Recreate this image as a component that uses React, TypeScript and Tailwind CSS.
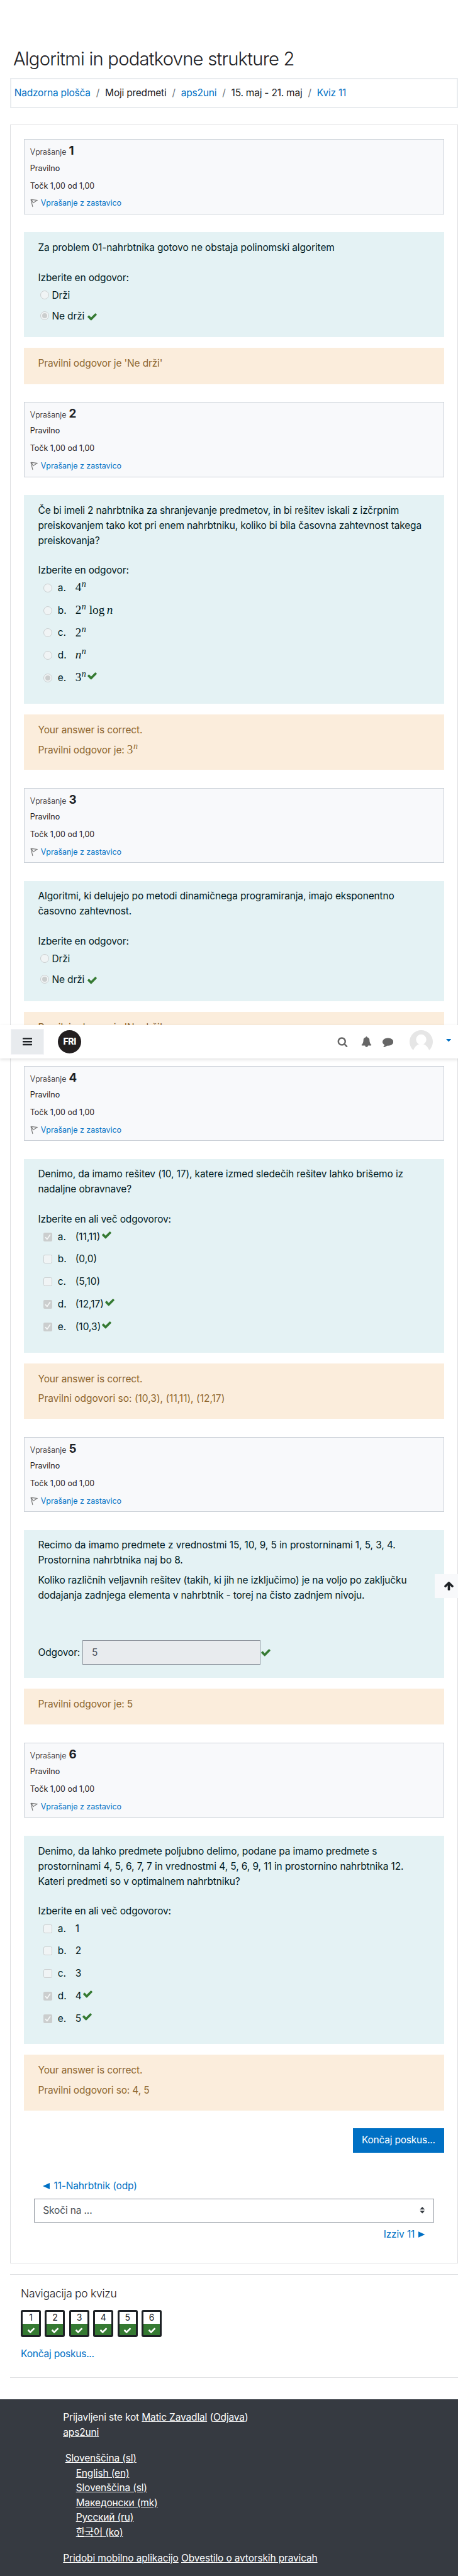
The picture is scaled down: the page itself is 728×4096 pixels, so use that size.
import React from "react";

function Svg({ d, className }: { d: string; className: string }) {
  return (
    <svg viewBox="0 0 1792 1792" fill="currentColor" className={className}>
      <path d={d} />
    </svg>
  );
}

const CHECK =
  "M1671 566q0 40-28 68l-724 724-136 136q-28 28-68 28t-68-28l-136-136-362-362q-28-28-28-68t28-68l136-136q28-28 68-28t68 28l294 295 656-657q28-28 68-28t68 28l136 136q28 28 28 68z";
const SEARCH =
  "M1216 832q0-185-131.5-316.5t-316.5-131.5-316.5 131.5-131.5 316.5 131.5 316.5 316.5 131.5 316.5-131.5 131.5-316.5zm512 832q0 52-38 90t-90 38q-54 0-90-38l-343-342q-179 124-399 124-143 0-273.5-55.5t-225-150-150-225-55.5-273.5 55.5-273.5 150-225 225-150 273.5-55.5 273.5 55.5 225 150 150 225 55.5 273.5q0 220-124 399l343 343q37 37 37 90z";
const BELL =
  "M912 1696q0-16-16-16-59 0-101.5-42.5t-42.5-101.5q0-16-16-16t-16 16q0 73 51.5 124.5t124.5 51.5q16 0 16-16zm816-288q0 52-38 90t-90 38h-448q0 106-75 181t-181 75-181-75-75-181h-448q-52 0-90-38t-38-90q50-42 91-88t85-119.5 74.5-158.5 50-206 19.5-260q0-152 117-282.5t307-158.5q-8-19-8-39 0-40 28-68t68-28 68 28 28 68q0 20-8 39 190 28 307 158.5t117 282.5q0 139 19.5 260t50 206 74.5 158.5 85 119.5 91 88z";
const COMMENT =
  "M1792 896q0 174-120 321.5t-326 233-450 85.5q-70 0-145-8-198 175-460 242-49 14-114 22-17 2-30.5-9t-17.5-29v-1q-3-4-.5-12t2-10 4.5-9.5l6-9 7-8.5 8-9q7-8 31-34.5t34.5-38 31-39.5 32.5-51 27-59 26-76q-157-89-247.5-220t-90.5-281q0-130 71-248.5t191-204.5 286-136.5 348-50.5q244 0 450 85.5t326 233 120 321.5z";
const ARROW_UP =
  "M1675 971q0 51-37 90l-75 75q-38 38-91 38-54 0-90-38l-294-293v704q0 52-37.5 84.5t-90.5 32.5h-128q-53 0-90.5-32.5t-37.5-84.5v-704l-294 293q-36 38-90 38t-90-38l-75-75q-38-38-38-90 0-53 38-91l651-651q35-37 90-37 54 0 91 37l651 651q37 39 37 91z";

function Tick({ className = "" }: { className?: string }) {
  return <Svg d={CHECK} className={"size-[17px] shrink-0 text-[#357a32] " + className} />;
}

function Radio({ on, className = "" }: { on?: boolean; className?: string }) {
  return (
    <span className={"flex size-[14px] shrink-0 items-center justify-center rounded-full border border-[#cbcfd0] bg-[#f0f4f5] " + className}>
      {on && <span className="size-[8px] rounded-full bg-[#cbcece]" />}
    </span>
  );
}

function Box({ on }: { on?: boolean }) {
  return on ? (
    <span className="flex size-[14px] shrink-0 items-center justify-center rounded-[2px] bg-[#cbcece]">
      <svg viewBox="0 0 14 14" className="size-[14px]">
        <path d="M3.4 7.6 5.8 10.4 10.6 3.6" fill="none" stroke="#f4f7f7" strokeWidth="1.7" strokeLinecap="round" strokeLinejoin="round" />
      </svg>
    </span>
  ) : (
    <span className="size-[14px] shrink-0 rounded-[2.5px] border border-[#cbcfd0] bg-[#f0f4f5]" />
  );
}

function Pow({ base, tail, className = "" }: { base: React.ReactNode; tail?: React.ReactNode; className?: string }) {
  return (
    <span className={"inline-flex h-6 items-baseline font-['Liberation_Serif',serif] text-[19.2px] leading-6 tracking-normal " + className}>
      {base}
      <i className="relative -top-[7px] ml-[0.5px] text-[14px]">n</i>
      {tail}
    </span>
  );
}

function Info({ n }: { n: number }) {
  return (
    <div className="mb-[28.4px] h-[119.7px] border border-[#cad0d7] bg-[#f8f9fb] px-[8.3px] text-[12.5px] tracking-[-0.01px]">
      <div className="mt-[6.1px] flex h-6 items-baseline leading-6">
        <span className="font-light tracking-[-0.06px]">Vprašanje</span>
        <b className="ml-[4px] text-[18.8px] leading-6">{n}</b>
      </div>
      <div className="mt-[5.4px] h-5 leading-5">Pravilno</div>
      <div className="mt-[7.8px] h-5 leading-5">Točk 1,00 od 1,00</div>
      <div className="mt-[7.8px] flex h-5 items-center leading-5 tracking-[-0.06px] text-[#0070c4]">
        <svg viewBox="0 0 12 14" className="mr-[5px] h-[14px] w-[12px] text-[#777]">
          <path d="M1 1 4 13M2 1.4 11 2.4 4.6 6.6z" fill="none" stroke="currentColor" strokeWidth="1.1" />
        </svg>
        Vprašanje z zastavico
      </div>
    </div>
  );
}

function Body({ className, children }: { className: string; children: React.ReactNode }) {
  return <div className={"bg-[#e4f2f4] px-[22px] pt-[12.7px] whitespace-nowrap text-[#001a1e] " + className}>{children}</div>;
}

function Feedback({ className, children }: { className: string; children: React.ReactNode }) {
  return <div className={"mt-[17.1px] mb-[28.3px] bg-[#fbeddc] px-[22px] pt-[12.8px] whitespace-nowrap text-[#8e662e] " + className}>{children}</div>;
}

function TrueFalse() {
  return (
    <div className="mt-[4.6px] flex flex-col gap-[9px] pl-[4px]">
      <div className="flex h-6 items-center">
        <Radio className="mr-[4px] mb-[3px]" />
        Drži
      </div>
      <div className="flex h-6 items-center">
        <Radio on className="mr-[4px] mb-[3px]" />
        Ne drži
        <Tick className="ml-[4.3px]" />
      </div>
    </div>
  );
}

type Option = { label: React.ReactNode; on?: boolean; right?: boolean };

function Choices({ options, multi }: { options: Option[]; multi?: boolean }) {
  return (
    <div className="mt-[4.1px] flex flex-col gap-[11.8px] pl-[8.2px] tracking-normal">
      {options.map((o, i) => (
        <div key={i} className="flex h-6 items-center">
          {multi ? <Box on={o.on} /> : <Radio on={o.on} />}
          <span className="ml-[9px] w-[28px]">{"abcde"[i]}.</span>
          {o.label}
          {o.right && <Tick className="mb-[6.5px] ml-[1.2px]" />}
        </div>
      ))}
    </div>
  );
}

function Correct({ children }: { children: React.ReactNode }) {
  return (
    <Feedback className="h-[88.5px]">
      <p>Your answer is correct.</p>
      <p className="mt-[7.8px] h-6">{children}</p>
    </Feedback>
  );
}

function Navbar() {
  return (
    <nav className="absolute top-[1629.8px] left-0 flex h-[53.3px] w-[728px] items-center bg-white shadow-[0_2px_5px_rgba(0,0,0,0.12)]">
      <div className="ml-[17.4px] flex h-[41.4px] w-[52.2px] items-center justify-center border border-[#f3f4f7] bg-[#e8ebee]">
        <svg viewBox="0 0 15 12" className="h-[12.4px] w-[15px]" fill="#1d2125">
          <rect width="15" height="2.4" rx=".6" />
          <rect y="4.8" width="15" height="2.4" rx=".6" />
          <rect y="9.6" width="15" height="2.4" rx=".6" />
        </svg>
      </div>
      <div className="ml-[22.6px] flex size-[37px] items-center justify-center rounded-full bg-[#231f20] text-[14px] font-extrabold tracking-[-0.4px] text-white">FRI</div>
      <div className="ml-[406.7px] flex items-center text-[#666]">
        <Svg d={SEARCH} className="size-[17px]" />
        <Svg d={BELL} className="ml-[21.4px] size-[17px]" />
        <Svg d={COMMENT} className="ml-[16.6px] size-[17.3px]" />
      </div>
      <svg viewBox="0 0 37 37" className="ml-[25.7px] size-[37px]">
        <clipPath id="face">
          <circle cx="18.5" cy="18.5" r="18.5" />
        </clipPath>
        <g clipPath="url(#face)">
          <rect width="37" height="32" fill="#e6e6e6" />
          <circle cx="18.5" cy="15" r="8.2" fill="#fff" />
          <path d="M5.4 33C7.5 27.5 11 23.8 15 22.3h7c4 1.5 7.5 5.2 9.6 10.7z" fill="#fff" />
        </g>
      </svg>
      <svg viewBox="0 0 8 4.5" preserveAspectRatio="none" className="mb-[3.5px] ml-[21px] h-[4.5px] w-[8.3px]">
        <path d="M0 0h8L4 4.5z" fill="#0070c4" />
      </svg>
    </nav>
  );
}

export default function App() {
  return (
    <div className="relative h-[4096px] w-[728px] overflow-hidden bg-white font-['Inter','Noto_Sans_CJK_KR',sans-serif] text-[15.5px] leading-6 tracking-[-0.15px] text-[#1d2125]">
      <h1 className="mt-[74px] ml-[20.9px] h-[40px] text-[29.2px] leading-[40px] font-light tracking-[-0.76px] whitespace-nowrap">
        Algoritmi in podatkovne strukture 2
      </h1>
      <div className="mt-[10.4px] ml-[15.8px] flex h-[47.3px] items-center gap-[9px] border-2 border-[#e9ecef] px-[5px] tracking-[-0.22px] whitespace-nowrap text-[#0070c4]">
        <span>Nadzorna plošča</span>
        <span className="text-[#6a737b]">/</span>
        <span className="text-[#1d2125]">Moji predmeti</span>
        <span className="text-[#6a737b]">/</span>
        <span>aps2uni</span>
        <span className="text-[#6a737b]">/</span>
        <span className="text-[#1d2125]">15. maj - 21. maj</span>
        <span className="text-[#6a737b]">/</span>
        <span>Kviz 11</span>
      </div>

      <main className="mt-[26.1px] ml-[15.8px] h-[3401px] border border-[#dedfe1] pr-[21.3px] pl-[21.7px] pt-[22.5px]">
        <Info n={1} />
        <Body className="h-[167px]">
          <p className="tracking-[-0.13px]">Za problem 01-nahrbtnika gotovo ne obstaja polinomski algoritem</p>
          <p className="mt-[23.6px]">Izberite en odgovor:</p>
          <TrueFalse />
        </Body>
        <Feedback className="h-[57.1px]">Pravilni odgovor je 'Ne drži'</Feedback>

        <Info n={2} />
        <Body className="h-[331.7px]">
          <p className="tracking-[-0.164px]">
            Če bi imeli 2 nahrbtnika za shranjevanje predmetov, in bi rešitev iskali z izčrpnim
            <br />
            preiskovanjem tako kot pri enem nahrbtniku, koliko bi bila časovna zahtevnost takega
            <br />
            preiskovanja?
          </p>
          <p className="mt-[23px]">Izberite en odgovor:</p>
          <Choices
            options={[
              { label: <Pow className="mb-[1.6px]" base="4" /> },
              {
                label: (
                  <Pow
                    className="mb-[1.6px]"
                    base="2"
                    tail={
                      <span className="ml-[5px]">
                        log<i className="ml-[3.5px]">n</i>
                      </span>
                    }
                  />
                ),
              },
              { label: <Pow className="mb-[1.6px]" base="2" /> },
              { label: <Pow className="mb-[1.6px]" base={<i>n</i>} /> },
              { label: <Pow className="mb-[1.6px]" base="3" />, on: true, right: true },
            ]}
          />
        </Body>
        <Correct>
          Pravilni odgovor je: <Pow base="3" />
        </Correct>

        <Info n={3} />
        <Body className="h-[191.5px]">
          <p>
            Algoritmi, ki delujejo po metodi dinamičnega programiranja, imajo eksponentno
            <br />
            časovno zahtevnost.
          </p>
          <p className="mt-[23.6px]">Izberite en odgovor:</p>
          <TrueFalse />
        </Body>
        <Feedback className="h-[57.1px]">Pravilni odgovor je 'Ne drži'</Feedback>

        <Info n={4} />
        <Body className="h-[308.1px]">
          <p className="tracking-[-0.13px]">
            Denimo, da imamo rešitev (10, 17), katere izmed sledečih rešitev lahko brišemo iz
            <br />
            nadaljne obravnave?
          </p>
          <p className="mt-[23.2px]">Izberite en ali več odgovorov:</p>
          <Choices
            multi
            options={[
              { label: "(11,11)", on: true, right: true },
              { label: "(0,0)" },
              { label: "(5,10)" },
              { label: "(12,17)", on: true, right: true },
              { label: "(10,3)", on: true, right: true },
            ]}
          />
        </Body>
        <Correct>
          <span className="tracking-[0.01px]">Pravilni odgovori so: (10,3), (11,11), (12,17)</span>
        </Correct>

        <Info n={5} />
        <Body className="h-[235.6px]">
          <p className="tracking-[-0.1px]">
            Recimo da imamo predmete z vrednostmi 15, 10, 9, 5 in prostorninami 1, 5, 3, 4.
            <br />
            Prostornina nahrbtnika naj bo 8.
          </p>
          <p className="mt-[7.8px]">
            Koliko različnih veljavnih rešitev (takih, ki jih ne izključimo) je na voljo po zaključku
            <br />
            dodajanja zadnjega elementa v nahrbtnik - torej na čisto zadnjem nivoju.
          </p>
          <div className="mt-[59px] flex h-[38.8px] items-center">
            <span className="w-[70.5px]">Odgovor:</span>
            <span className="flex h-[38.8px] w-[283.3px] items-center border border-[#8f959e] bg-[#e8ebee] pl-[14px] text-[#495057]">5</span>
            <Tick />
          </div>
        </Body>
        <Feedback className="h-[57.1px]">Pravilni odgovor je: 5</Feedback>

        <Info n={6} />
        <Body className="h-[331.5px]">
          <p className="tracking-[-0.092px]">
            <span className="tracking-[-0.15px]">Denimo, da lahko predmete poljubno delimo, podane pa imamo predmete s</span>
            <br />
            prostorninami 4, 5, 6, 7, 7 in vrednostmi 4, 5, 6, 9, 11 in prostornino nahrbtnika 12.
            <br />
            <span className="tracking-[-0.15px]">Kateri predmeti so v optimalnem nahrbtniku?</span>
          </p>
          <p className="mt-[23px]">Izberite en ali več odgovorov:</p>
          <Choices
            multi
            options={[
              { label: "1" },
              { label: "2" },
              { label: "3" },
              { label: "4", on: true, right: true },
              { label: "5", on: true, right: true },
            ]}
          />
        </Body>
        <Correct>Pravilni odgovori so: 4, 5</Correct>

        <div className="flex justify-end">
          <div className="flex h-[38.3px] w-[144.8px] items-center justify-center bg-[#0070c4] tracking-[-0.22px] text-white">Končaj poskus...</div>
        </div>
        <div className="mt-[41.5px] flex h-6 items-center pl-[30px] text-[#0070c4]">
          <svg viewBox="0 0 11 10" className="mr-[6px] h-[10px] w-[11px]">
            <path d="M11 0v10L0 5z" fill="currentColor" />
          </svg>
          11-Nahrbtnik (odp)
        </div>
        <div className="mx-[15.8px] mt-[7.5px] flex h-[38.4px] items-center justify-between border border-[#8f959e] bg-white pr-[13px] pl-[13px] text-[#495057]">
          Skoči na ...
          <svg viewBox="0 0 8 10.5" className="h-[10.5px] w-[8.5px]">
            <path d="M0 4.3h8L4 0zM0 6.2h8l-4 4.3z" fill="#343a40" />
          </svg>
        </div>
        <div className="mt-[7.5px] flex h-6 items-center justify-end pr-[30px] text-[#0070c4]">
          Izziv 11
          <svg viewBox="0 0 11 10" className="ml-[6px] h-[10px] w-[10.5px]">
            <path d="M0 0v10l11-5z" fill="currentColor" />
          </svg>
        </div>
      </main>

      <section className="mt-[17px] ml-[15.8px] h-[165.5px] border-y border-[#dedfe1] pl-[17.3px]">
        <h2 className="mt-[16px] h-[27px] text-[17.5px] leading-[27px] font-light tracking-[-0.28px]">Navigacija po kvizu</h2>
        <div className="mt-[13.5px] flex gap-[6.4px]">
          {[1, 2, 3, 4, 5, 6].map((n) => (
            <div key={n} className="flex h-[43px] w-8 flex-col overflow-hidden rounded-[3px] border-[3px] border-[#1d2125] bg-white">
              <span className="h-[18.5px] text-center text-[14px] leading-[18px]">{n}</span>
              <span className="flex flex-1 items-center justify-center bg-[#357a32] pt-[2px] text-white">
                <Svg d={CHECK} className="size-[13px]" />
              </span>
            </div>
          ))}
        </div>
        <p className="mt-[14.5px] tracking-[-0.22px] text-[#0070c4]">Končaj poskus...</p>
      </section>

      <footer className="mt-[33.7px] h-[281px] bg-[#363a41] pt-[17.4px] pl-[100.3px] text-white">
        <p>
          Prijavljeni ste kot <u>Matic Zavadlal</u> (<u>Odjava</u>)
        </p>
        <p>
          <u>aps2uni</u>
        </p>
        <p className="mt-[16.3px] pl-[3.4px]">
          <u>Slovenščina (sl)</u>
        </p>
        <ul className="flex flex-col pl-[20.4px] leading-[23.6px] underline">
          <li>English (en)</li>
          <li>Slovenščina (sl)</li>
          <li>Македонски (mk)</li>
          <li>Русский (ru)</li>
          <li>한국어 (ko)</li>
        </ul>
        <p className="mt-[17px] tracking-[-0.15px]">
          <u>Pridobi mobilno aplikacijo</u> <u>Obvestilo o avtorskih pravicah</u>
        </p>
      </footer>

      <Navbar />
      <div className="absolute top-[2502.5px] right-0 flex h-[38.5px] w-[37px] items-center justify-center bg-[#f8f9fb] pl-[7px]">
        <Svg d={ARROW_UP} className="size-[17px] text-[#1d2125]" />
      </div>
    </div>
  );
}
